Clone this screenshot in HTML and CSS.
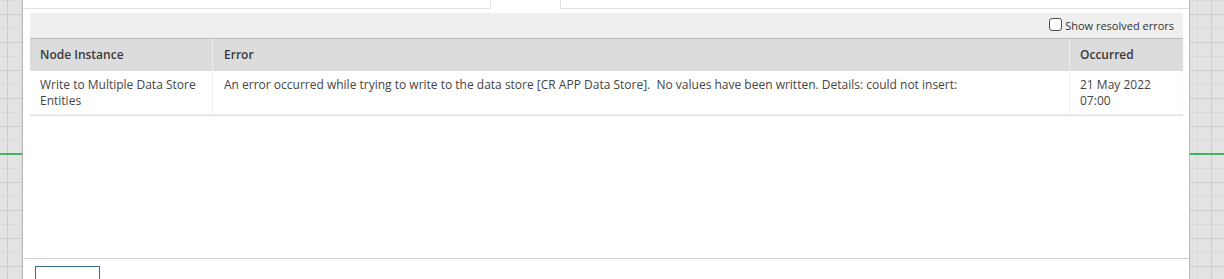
FILE: index.html
```html
<!DOCTYPE html>
<html>
<head>
<meta charset="utf-8">
<link rel="stylesheet" href="styles.css">
</head>
<body>
<div class="canvas">
  <div class="connector connector-left"></div>
  <div class="connector connector-right"></div>
  <div class="panel">
    <div class="tabs">
      <div class="tab tab-a"></div>
      <div class="tab tab-active"></div>
      <div class="tab tab-b"></div>
    </div>
    <div class="content">
      <div class="toolbar">
        <label class="resolved">
          <span class="checkbox"></span>
          <span>Show resolved errors</span>
        </label>
      </div>
      <div class="table">
        <div class="row head">
          <div class="cell c1">Node Instance</div>
          <div class="cell c2">Error</div>
          <div class="cell c3">Occurred</div>
        </div>
        <div class="row body-row">
          <div class="cell c1">Write to Multiple Data Store Entities</div>
          <div class="cell c2">An error occurred while trying to write to the data store [CR APP Data Store].&nbsp; No values have been written. Details: could not insert:</div>
          <div class="cell c3">21 May 2022 07:00</div>
        </div>
      </div>
    </div>
    <div class="footer">
      <div class="btn"></div>
    </div>
  </div>
</div>
</body>
</html>
```

FILE: styles.css
```css
* { box-sizing: border-box; }
html, body {
  margin: 0;
  padding: 0;
}
body {
  width: 1224px;
  height: 279px;
  overflow: hidden;
  font-family: "Open Sans", "Liberation Sans", sans-serif;
  color: #333;
  background-color: #e3e3e3;
  background-image:
    linear-gradient(to right, #cdcdcd 1px, transparent 1px),
    linear-gradient(to bottom, #cdcdcd 1px, transparent 1px),
    linear-gradient(to right, #dadada 1px, transparent 1px),
    linear-gradient(to bottom, #dadada 1px, transparent 1px);
  background-size: 28px 28px, 28px 28px, 14px 14px, 14px 14px;
  background-position: 7px 14px, 7px 14px, 7px 0, 7px 0;
}
.canvas {
  position: relative;
  height: 279px;
}
.connector {
  position: absolute;
  top: 153px;
  height: 2px;
  background: #3fb35f;
}
.connector-left { left: 0; width: 22px; }
.connector-right { left: 1190px; width: 34px; }
.panel {
  margin-left: 22px;
  width: 1168px;
  height: 279px;
  background: #fff;
  border-left: 1px solid #b9b9b9;
  border-right: 1px solid #b9b9b9;
  display: flex;
  flex-direction: column;
}
.tabs {
  display: flex;
  height: 9px;
  flex-shrink: 0;
}
.tab {
  height: 9px;
  border-bottom: 1px solid #e2e2e2;
}
.tab-a { width: 468px; border-right: 1px solid #e2e2e2; }
.tab-active { width: 69px; border-bottom: none; }
.tab-b { flex: 1; border-left: 1px solid #e2e2e2; }
.content {
  padding: 4px 6px 0 7px;
  height: 249px;
  flex-shrink: 0;
}
.toolbar {
  height: 25px;
  background: #efefef;
  display: flex;
  justify-content: flex-end;
  align-items: center;
  padding-right: 9px;
}
.resolved {
  display: flex;
  align-items: center;
  gap: 3px;
  font-size: 11px;
  color: #333;
}
.checkbox {
  width: 13px;
  height: 13px;
  border: 1px solid #4d4d4d;
  border-radius: 3px;
  background: #fff;
  margin-top: -2px;
}
.table {
  border-top: 1px solid #bdbdbd;
  box-shadow: 0 1px 1px #e4e4e4;
}
.row {
  display: flex;
  font-size: 12px;
}
.head {
  height: 32px;
  background: #dcdcdc;
  font-weight: 600;
  color: #3a3a3a;
  align-items: center;
}
.head .cell {
  height: 32px;
  display: flex;
  align-items: center;
}
.body-row {
  height: 44px;
  border-bottom: 1px solid #ececec;
}
.cell {
  padding: 0 10px;
  line-height: 16px;
}
.body-row .cell { padding-top: 6px; color: #444; }
.c1 { width: 183px; border-right: 1px solid #eeeeee; }
.c2 { width: 857px; border-right: 1px solid #eeeeee; padding-left: 11px; }
.c3 { flex: 1; }
.footer {
  border-top: 1px solid #d2d2d2;
  padding: 7px 0 0 12px;
  flex-shrink: 0;
}
.btn {
  width: 65px;
  height: 20px;
  border: 1px solid #3c6d8d;
  border-bottom: none;
}
```
